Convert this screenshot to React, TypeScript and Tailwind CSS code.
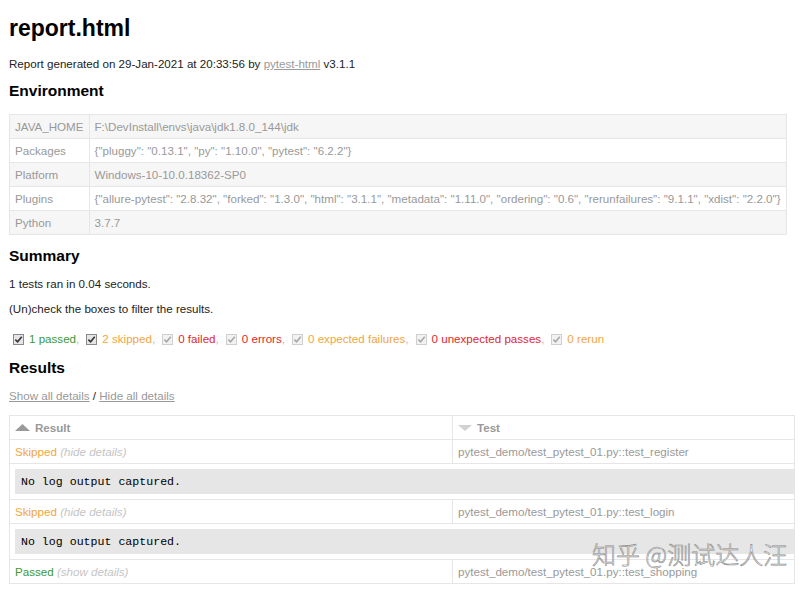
import type { ReactNode } from "react";

const env: [string, string][] = [
  ["JAVA_HOME", "F:\\DevInstall\\envs\\java\\jdk1.8.0_144\\jdk"],
  ["Packages", '{"pluggy": "0.13.1", "py": "1.10.0", "pytest": "6.2.2"}'],
  ["Platform", "Windows-10-10.0.18362-SP0"],
  [
    "Plugins",
    '{"allure-pytest": "2.8.32", "forked": "1.3.0", "html": "3.1.1", "metadata": "1.11.0", "ordering": "0.6", "rerunfailures": "9.1.1", "xdist": "2.2.0"}',
  ],
  ["Python", "3.7.7"],
];

const filters = [
  { label: "1 passed", color: "text-[#3a9a3a]", on: true },
  { label: "2 skipped", color: "text-[#f2a640]", on: true },
  { label: "0 failed", color: "text-[#e3262e]", on: false },
  { label: "0 errors", color: "text-[#e3262e]", on: false },
  { label: "0 expected failures", color: "text-[#f2a640]", on: false },
  { label: "0 unexpected passes", color: "text-[#e3262e]", on: false },
  { label: "0 rerun", color: "text-[#f2a640]", on: false },
];

const results = [
  { status: "Skipped", color: "text-[#f2a640]", toggle: "hide details", test: "pytest_demo/test_pytest_01.py::test_register", log: true },
  { status: "Skipped", color: "text-[#f2a640]", toggle: "hide details", test: "pytest_demo/test_pytest_01.py::test_login", log: true },
  { status: "Passed", color: "text-[#3a9a3a]", toggle: "show details", test: "pytest_demo/test_pytest_01.py::test_shopping", log: false },
];

function Check({ on }: { on: boolean }) {
  return (
    <span
      className={`inline-flex h-[11px] w-[11px] items-center justify-center border ${
        on ? "border-[#8a8a8a] bg-[#e6e6e6]" : "border-[#cfcfcf] bg-[#f2f2f2]"
      }`}
    >
      <svg viewBox="0 0 10 10" className="h-[9px] w-[9px]" aria-hidden>
        <path
          d="M1.5 5.2 L4 7.6 L8.6 2"
          fill="none"
          stroke={on ? "#333" : "#a8a8a8"}
          strokeWidth="1.8"
        />
      </svg>
    </span>
  );
}

function H2({ children, className }: { children: ReactNode; className?: string }) {
  return (
    <h2 className={`text-[15.5px] font-bold leading-[18px] text-black ${className ?? ""}`}>{children}</h2>
  );
}

export default function App() {
  return (
    <div className="relative min-h-screen overflow-hidden bg-white px-[9px] pb-6 font-['Liberation_Sans',Arial,sans-serif] text-[11.6px] text-[#999]">
      <h1 className="mt-[14px] text-[23px] font-bold leading-[28px] text-black">report.html</h1>
      <p className="mt-[15px] leading-[14px] text-[#222]">
        Report generated on 29-Jan-2021 at 20:33:56 by{" "}
        <a className="text-[#999] underline">pytest-html</a> v3.1.1
      </p>

      <H2 className="mt-[11px]">Environment</H2>
      <table className="mt-[14px] border-collapse border border-[#e6e6e6]">
        <tbody>
          {env.map(([k, v], i) => (
            <tr key={k} className={i % 2 === 0 ? "bg-[#f6f6f6]" : "bg-white"}>
              <td className="border border-[#e6e6e6] px-[5px] py-[5px] leading-[13px] whitespace-nowrap">{k}</td>
              <td className="border border-[#e6e6e6] px-[5px] py-[5px] leading-[13px] whitespace-nowrap">{v}</td>
            </tr>
          ))}
        </tbody>
      </table>

      <H2 className="mt-[12px]">Summary</H2>
      <p className="mt-[12px] leading-[14px] text-[#222]">1 tests ran in 0.04 seconds.</p>
      <p className="mt-[11px] leading-[14px] text-[#222]">(Un)check the boxes to filter the results.</p>

      <div className="mt-[16px] flex items-center pl-[4px] leading-[14px]">
        {filters.map((f, i) => (
          <span key={f.label} className="flex items-center">
            <Check on={f.on} />
            <span className={`ml-[5px] ${f.color}`}>{f.label}</span>
            {i < filters.length - 1 && <span className="mr-[7px] text-[#bbb]">,</span>}
          </span>
        ))}
      </div>

      <H2 className="mt-[13px]">Results</H2>
      <p className="mt-[12px] leading-[14px] text-[#222]">
        <a className="text-[#999] underline">Show all details</a> /{" "}
        <a className="text-[#999] underline">Hide all details</a>
      </p>

      <table className="mt-[12px] w-[786px] table-fixed border-collapse border border-[#e6e6e6] text-left">
        <colgroup>
          <col className="w-[443px]" />
          <col />
        </colgroup>
        <thead>
          <tr>
            <th className="border border-[#e6e6e6] px-[5px] py-[5px] leading-[13px] font-bold">
              <span className="flex items-center">
                <svg viewBox="0 0 15 7" className="mr-[5px] h-[7px] w-[15px]" aria-hidden>
                  <polygon points="0,7 7.5,0 15,7" fill="#9a9a9a" />
                </svg>
                Result
              </span>
            </th>
            <th className="border border-[#e6e6e6] px-[5px] py-[5px] leading-[13px] font-bold">
              <span className="flex items-center">
                <svg viewBox="0 0 14 6" className="mr-[5px] h-[6px] w-[14px]" aria-hidden>
                  <polygon points="0,0 14,0 7,6" fill="#d2d2d2" />
                </svg>
                Test
              </span>
            </th>
          </tr>
        </thead>
        <tbody>
          {results.map((r) => (
            <>
              <tr key={r.test}>
                <td className="border border-[#e6e6e6] px-[5px] py-[5px] leading-[13px]">
                  <span className={r.color}>{r.status}</span>{" "}
                  <span className="italic text-[#c4c4c4]">({r.toggle})</span>
                </td>
                <td className="border border-[#e6e6e6] px-[5px] py-[5px] leading-[13px] whitespace-nowrap">{r.test}</td>
              </tr>
              {r.log && (
                <tr key={r.test + "-log"}>
                  <td colSpan={2} className="border border-[#e6e6e6] py-[5px] pl-[5px] pr-0">
                    <div className="border border-[#e6e6e6] bg-[#e6e6e6] p-[5px] font-['Liberation_Mono','Courier_New',monospace] text-[11.6px] leading-[13px] text-black">
                      No log output captured.
                    </div>
                  </td>
                </tr>
              )}
            </>
          ))}
        </tbody>
      </table>

      <div className="pointer-events-none absolute left-[592px] top-[539px] font-['Noto_Sans_CJK_SC',sans-serif] text-[24px] font-light leading-[30px] text-white [-webkit-text-stroke:0.6px_#8a8a8a]">
        知乎 @测试达人汪
      </div>
    </div>
  );
}
